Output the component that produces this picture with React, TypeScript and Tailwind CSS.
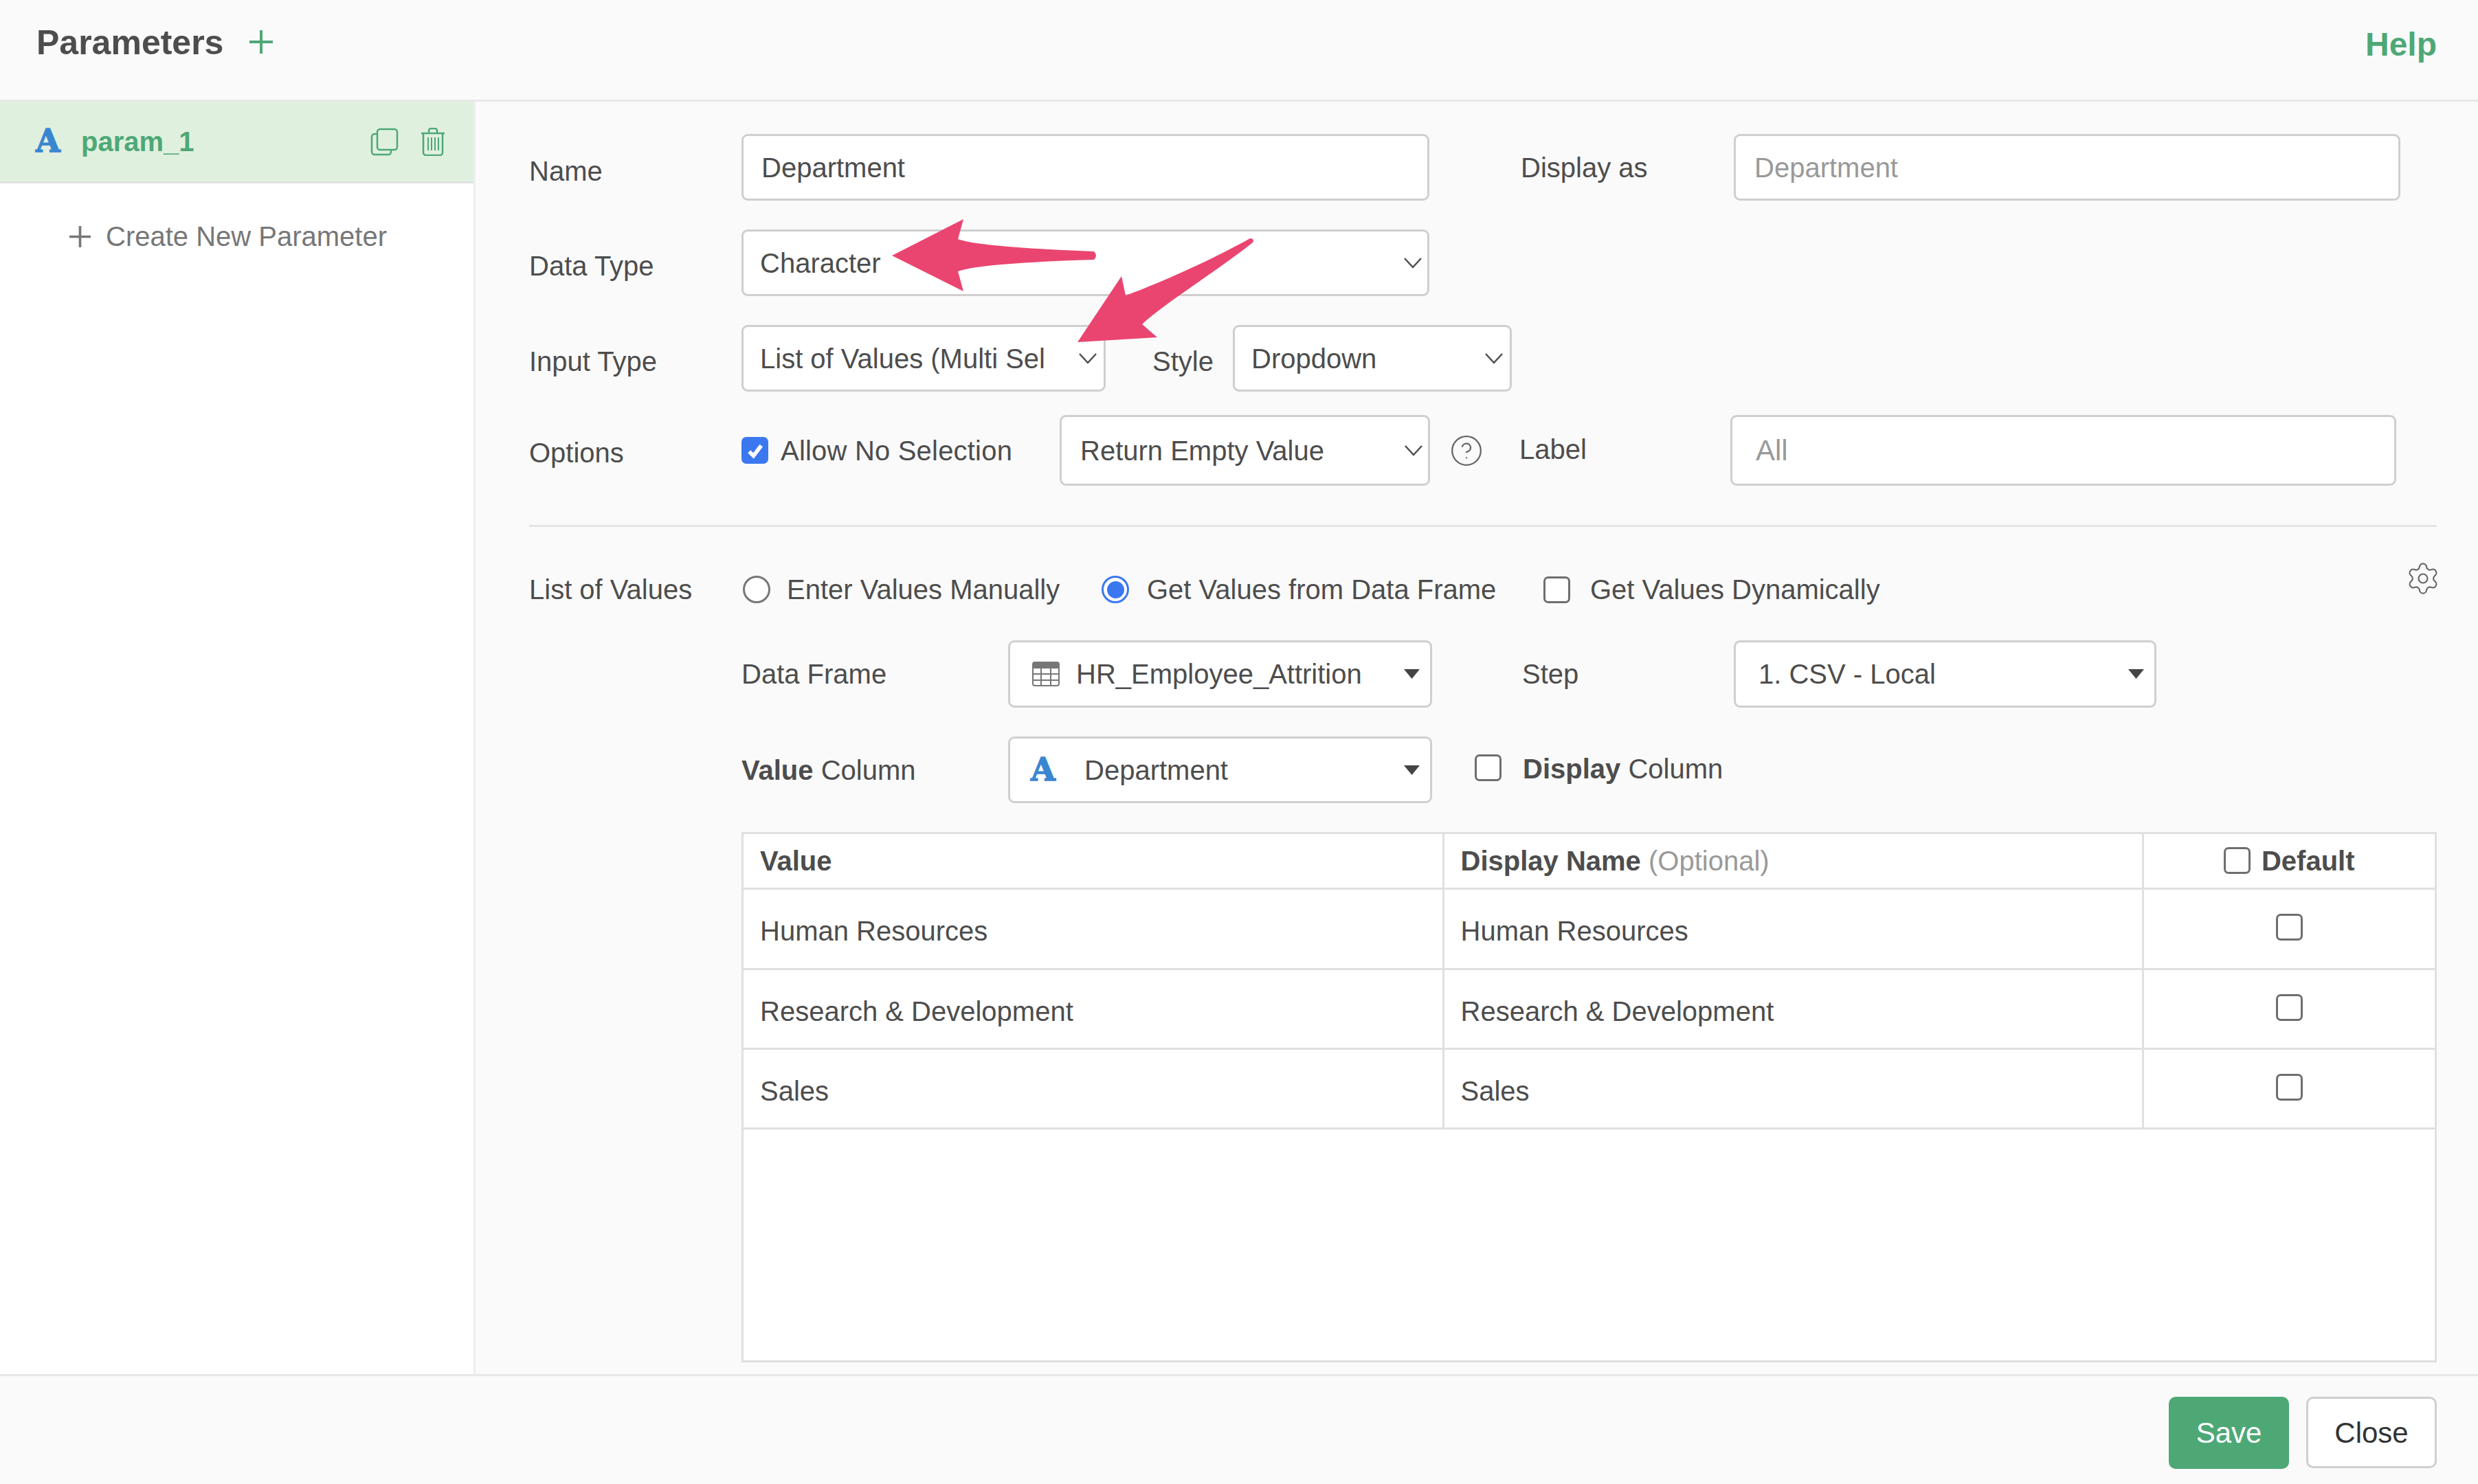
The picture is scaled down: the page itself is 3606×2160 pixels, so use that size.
import { ReactNode } from "react";
import { CircleHelp, Settings } from "lucide-react";

const Cross = ({ className }: { className: string }) => (
  <svg viewBox="0 0 34 34" className={className} fill="none" stroke="currentColor" strokeWidth="4">
    <path d="M17 0V34M0 17H34" />
  </svg>
);

const Chevron = () => (
  <svg viewBox="0 0 26 16" className="w-[26px] h-[16px] shrink-0 text-[#4d4d4d]" fill="none" stroke="currentColor" strokeWidth="2.5">
    <path d="M1 1L13 14L25 1" />
  </svg>
);

const Caret = () => (
  <svg viewBox="0 0 23 14" className="w-[23px] h-[14px] shrink-0 text-[#444]" fill="currentColor">
    <path d="M0 0H23L11.5 14Z" />
  </svg>
);

const TypeA = ({ className = "" }: { className?: string }) => (
  <span className={`font-['DejaVu_Serif',serif] font-bold text-[46px] leading-none text-[#3a86d1] [-webkit-text-stroke:1.5px_#3a86d1] ${className}`}>A</span>
);

const Check = ({ on = false }: { on?: boolean }) => (
  <span className={`flex items-center justify-center w-[39px] h-[39px] shrink-0 rounded-[7px] border-[3px] ${on ? "bg-[#3b78f0] border-[#3b78f0]" : "bg-white border-[#6e6e6e]"}`}>
    {on && (
      <svg viewBox="0 0 24 24" className="w-[30px] h-[30px]" fill="none" stroke="white" strokeWidth="4.5">
        <path d="M5 13L10 18L19 6" />
      </svg>
    )}
  </span>
);

const Radio = ({ on = false }: { on?: boolean }) => (
  <span className={`flex items-center justify-center w-[40px] h-[40px] shrink-0 rounded-full border-[3px] bg-white ${on ? "border-[#3b78f0]" : "border-[#777]"}`}>
    {on && <span className="w-[25px] h-[25px] rounded-full bg-[#3b78f0]" />}
  </span>
);

const Box = ({ className, children }: { className: string; children: ReactNode }) => (
  <div className={`flex items-center bg-white border-[3px] border-[#cfcfcf] rounded-[9px] shrink-0 ${className}`}>{children}</div>
);

const Select = ({ className, children, pr = "pr-[10px]" }: { className: string; children: ReactNode; pr?: string }) => (
  <Box className={`justify-between pl-[24px] ${pr} ${className}`}>
    <span className="whitespace-nowrap">{children}</span>
    <Chevron />
  </Box>
);

const rows = ["Human Resources", "Research & Development", "Sales"];
const rowHeights = ["h-[117px]", "h-[116px]", "h-[116px]"];

export default function App() {
  return (
    <div className="relative w-[3606px] h-[2160px] flex flex-col overflow-hidden bg-[#fafafa] text-[#4d4d4d] text-[40px] font-['Liberation_Sans',Arial,sans-serif]">
      {/* header */}
      <header className="h-[148px] shrink-0 flex justify-between border-b-[3px] border-[#e8e8e8] pl-[53px] pr-[60px]">
        <div className="flex items-start pt-[32px]">
          <span className="text-[50px] leading-[60px] font-bold">Parameters</span>
          <Cross className="w-[34px] h-[34px] ml-[38px] mt-[12px] text-[#4ea876]" />
        </div>
        <span className="pt-[35px] text-[48px] leading-[60px] font-bold text-[#4ea876]">Help</span>
      </header>

      <div className="flex-1 flex min-h-0">
        {/* sidebar */}
        <aside className="w-[692px] shrink-0 bg-white border-r-[3px] border-[#eeeeee]">
          <div className="h-[119px] flex items-center bg-[#e0f0df] border-b-[3px] border-[#e2e2e2] pl-[52px] pr-[42px]">
            <TypeA className="w-[40px] -mt-[2px]" />
            <span className="ml-[26px] font-bold text-[#4ea876]">param_1</span>
            <svg viewBox="0 0 41 41" className="ml-auto w-[41px] h-[41px] text-[#4ea876]" fill="none" stroke="currentColor" strokeWidth="2.5">
              <rect x="10" y="2" width="29" height="30" rx="4" />
              <path d="M10 9H6A4 4 0 0 0 2 13V35A4 4 0 0 0 6 39H26A4 4 0 0 0 30 35V32" />
            </svg>
            <svg viewBox="0 0 34 41" className="ml-[33px] w-[34px] h-[41px] text-[#4ea876]" fill="none" stroke="currentColor" strokeWidth="2.5">
              <path d="M0 8H34M11 7V4A3 3 0 0 1 14 1H20A3 3 0 0 1 23 4V7M3 8V36A4 4 0 0 0 7 40H27A4 4 0 0 0 31 36V8" />
              <path d="M10 14V33M15 14V33M20 14V33M25 14V33" strokeWidth="2" />
            </svg>
          </div>
          <div className="flex items-center mt-[47px] pl-[101px] text-[#777]">
            <Cross className="w-[31px] h-[31px]" />
            <span className="ml-[22px]">Create New Parameter</span>
          </div>
        </aside>

        {/* form */}
        <main className="flex-1 min-w-0 pl-[78px] pr-[60px]">
          <div className="flex mt-[47px] h-[97px] items-center">
            <span className="w-[309px] pt-[10px]">Name</span>
            <Box className="w-[1001px] h-full pl-[26px]">Department</Box>
            <span className="w-[310px] ml-[133px]">Display as</span>
            <Box className="w-[970px] h-full pl-[27px] text-[#999]">Department</Box>
          </div>

          <div className="flex mt-[42px] h-[97px] items-center">
            <span className="w-[309px] pt-[8px]">Data Type</span>
            <Select className="w-[1001px] h-full" pr="pr-[8px]">Character</Select>
          </div>

          <div className="flex mt-[42px] h-[97px] items-center">
            <span className="w-[309px] pt-[8px]">Input Type</span>
            <Select className="w-[530px] h-full">List of Values (Multi Sel</Select>
            <span className="ml-[68px] w-[117px] pt-[8px]">Style</span>
            <Select className="w-[406px] h-full">Dropdown</Select>
          </div>

          <div className="flex mt-[34px] h-[103px] items-center">
            <span className="w-[309px] pt-[6px]">Options</span>
            <Check on />
            <span className="ml-[18px] w-[406px] whitespace-nowrap tracking-[0.2px]">Allow No Selection</span>
            <Select className="w-[539px] h-full !pl-[27px]" pr="pr-[8px]">Return Empty Value</Select>
            <CircleHelp className="ml-[28px] w-[50px] h-[50px] text-[#666]" strokeWidth={1.1} />
            <span className="ml-[52px] w-[307px] -mt-[4px]">Label</span>
            <Box className="w-[969px] h-full pl-[34px] text-[42px] text-[#999]">All</Box>
          </div>

          <hr className="mt-[57px] border-t-[3px] border-[#e4e4e4]" />

          <div className="relative flex mt-[61px] h-[60px] items-center">
            <span className="w-[311px]">List of Values</span>
            <Radio />
            <span className="ml-[24px] w-[458px] whitespace-nowrap">Enter Values Manually</span>
            <Radio on />
            <span className="ml-[26px] w-[577px] whitespace-nowrap">Get Values from Data Frame</span>
            <Check />
            <span className="ml-[29px] whitespace-nowrap">Get Values Dynamically</span>
            <Settings className="absolute -right-[6px] -top-[12px] w-[52px] h-[52px] text-[#666]" strokeWidth={1} />
          </div>

          <div className="flex mt-[44px] h-[98px] items-center pl-[309px]">
            <span className="w-[388px]">Data Frame</span>
            <Box className="w-[617px] h-full justify-between pl-[32px] pr-[15px]">
              <span className="flex items-center">
                <svg viewBox="0 0 40 36" className="w-[40px] h-[36px] text-[#777]" fill="none" stroke="currentColor" strokeWidth="2">
                  <rect x="1" y="1" width="38" height="34" rx="3" />
                  <path d="M1 9H39M1 18H39M1 27H39M13 1V35M27 1V35" />
                  <path d="M1 5H39" strokeWidth="7" />
                </svg>
                <span className="ml-[24px]">HR_Employee_Attrition</span>
              </span>
              <Caret />
            </Box>
            <span className="ml-[131px] w-[308px]">Step</span>
            <Box className="w-[615px] h-full justify-between pl-[33px] pr-[15px]">
              <span>1. CSV - Local</span>
              <Caret />
            </Box>
          </div>

          <div className="flex mt-[42px] h-[97px] items-center pl-[309px]">
            <span className="w-[388px]"><b>Value</b> Column</span>
            <Box className="w-[617px] h-full justify-between pl-[30px] pr-[15px]">
              <span className="flex items-center">
                <TypeA className="w-[42px] -mt-[2px]" />
                <span className="ml-[36px]">Department</span>
              </span>
              <Caret />
            </Box>
            <span className="ml-[62px] -mt-[6px]"><Check /></span>
            <span className="ml-[31px] -mt-[4px]"><b>Display</b> Column</span>
          </div>

          <div className="mt-[42px] ml-[309px] h-[772px] bg-white border-[3px] border-[#e0e0e0]">
            <table className="w-full table-fixed border-collapse">
              <colgroup>
                <col className="w-[1018px]" />
                <col className="w-[1018px]" />
                <col />
              </colgroup>
              <thead>
                <tr className="h-[79px] border-b-[3px] border-[#e0e0e0]">
                  <th className="text-left font-bold pl-[24px] border-r-[3px] border-[#e0e0e0]">Value</th>
                  <th className="text-left font-bold pl-[24px] border-r-[3px] border-[#e0e0e0]">
                    Display Name <span className="font-normal text-[#999]">(Optional)</span>
                  </th>
                  <th className="font-bold">
                    <span className="flex items-center justify-center">
                      <Check />
                      <span className="ml-[16px]">Default</span>
                    </span>
                  </th>
                </tr>
              </thead>
              <tbody>
                {rows.map((row, i) => (
                  <tr key={row} className={`${rowHeights[i]} border-b-[3px] border-[#e0e0e0]`}>
                    <td className="pl-[24px] pt-[7px] border-r-[3px] border-[#e0e0e0]">{row}</td>
                    <td className="pl-[24px] pt-[7px] border-r-[3px] border-[#e0e0e0]">{row}</td>
                    <td>
                      <span className="flex justify-center -mt-[4px]"><Check /></span>
                    </td>
                  </tr>
                ))}
              </tbody>
            </table>
          </div>
        </main>
      </div>

      {/* footer */}
      <footer className="h-[160px] shrink-0 flex justify-end gap-[25px] border-t-[3px] border-[#e8e8e8] pt-[30px] pr-[60px] text-[42px]">
        <button className="w-[175px] h-[105px] rounded-[10px] bg-[#4ea876] text-white">Save</button>
        <button className="w-[190px] h-[104px] rounded-[10px] bg-white border-[3px] border-[#cfcfcf] text-[#333]">Close</button>
      </footer>

      {/* annotation arrows */}
      <svg viewBox="0 0 3606 2160" className="absolute inset-0 w-full h-full pointer-events-none" fill="#ea4570">
        <path d="M1298 372L1402 319L1394 348C1420 358 1520 363 1592 366Q1598 372 1592 378C1520 380 1420 385 1394 395L1402 424Z" />
        <path d="M1568 498L1632 402L1638 430C1680 415 1760 380 1819 347Q1826 347 1823 353C1770 395 1690 445 1662 472L1684 491Z" />
      </svg>
    </div>
  );
}
